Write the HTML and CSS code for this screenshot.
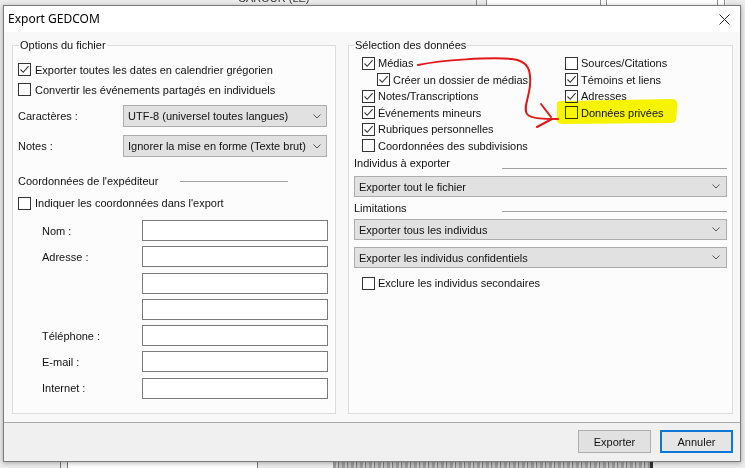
FILE: index.html
```html
<!DOCTYPE html>
<html lang="fr">
<head>
<meta charset="utf-8">
<title>Export GEDCOM</title>
<link rel="stylesheet" href="styles.css">
</head>
<body>
<span class="bg-text">CAROUR (LE)</span>
<div class="window">
  <div class="titlebar">
    <span class="title">Export GEDCOM</span>
    <svg class="close" width="11" height="11" viewBox="0 0 11 11"><path d="M0.5 0.5 L10.5 10.5 M10.5 0.5 L0.5 10.5" stroke="#222" stroke-width="1" fill="none"/></svg>
  </div>
  <div class="client">
    <div class="group group-left">
      <div class="legend">Options du fichier</div>
      <div class="opts">
        <label class="check"><span class="box"><svg viewBox="0 0 11 11"><path d="M1.5 5.5 L4.2 8.3 L9.6 2.2" stroke="#333" fill="none" stroke-width="1.1"/></svg></span>Exporter toutes les dates en calendrier grégorien</label>
        <label class="check"><span class="box"></span>Convertir les événements partagés en individuels</label>
      </div>
      <div class="field-row first">
        <span class="field-label">Caractères :</span>
        <div class="select">UTF-8 (universel toutes langues)<svg class="chev" viewBox="0 0 8 5"><path d="M0.5 0.5 L4 4 L7.5 0.5" stroke="#555" fill="none"/></svg></div>
      </div>
      <div class="field-row">
        <span class="field-label">Notes :</span>
        <div class="select">Ignorer la mise en forme (Texte brut)<svg class="chev" viewBox="0 0 8 5"><path d="M0.5 0.5 L4 4 L7.5 0.5" stroke="#555" fill="none"/></svg></div>
      </div>
      <div class="subhead subhead-left">Coordonnées de l'expéditeur<span class="rule"></span></div>
      <label class="check check-send"><span class="box"></span>Indiquer les coordonnées dans l'export</label>
      <div class="sender-grid">
        <span class="lab">Nom :</span><span class="input"></span>
        <span class="lab">Adresse :</span><span class="input"></span>
        <span class="lab"></span><span class="input"></span>
        <span class="lab"></span><span class="input"></span>
        <span class="lab">Téléphone :</span><span class="input"></span>
        <span class="lab">E-mail :</span><span class="input"></span>
        <span class="lab">Internet :</span><span class="input"></span>
      </div>
    </div>
    <div class="group group-right">
      <div class="legend legend-right">Sélection des données</div>
      <div class="sel">
        <div class="sel-col sel-col1">
          <label class="check small"><span class="box"><svg viewBox="0 0 11 11"><path d="M1.5 5.5 L4.2 8.3 L9.6 2.2" stroke="#333" fill="none" stroke-width="1.1"/></svg></span>Médias</label>
          <label class="check small indent"><span class="box"><svg viewBox="0 0 11 11"><path d="M1.5 5.5 L4.2 8.3 L9.6 2.2" stroke="#333" fill="none" stroke-width="1.1"/></svg></span>Créer un dossier de médias</label>
          <label class="check small"><span class="box"><svg viewBox="0 0 11 11"><path d="M1.5 5.5 L4.2 8.3 L9.6 2.2" stroke="#333" fill="none" stroke-width="1.1"/></svg></span>Notes/Transcriptions</label>
          <label class="check small"><span class="box"><svg viewBox="0 0 11 11"><path d="M1.5 5.5 L4.2 8.3 L9.6 2.2" stroke="#333" fill="none" stroke-width="1.1"/></svg></span>Événements mineurs</label>
          <label class="check small"><span class="box"><svg viewBox="0 0 11 11"><path d="M1.5 5.5 L4.2 8.3 L9.6 2.2" stroke="#333" fill="none" stroke-width="1.1"/></svg></span>Rubriques personnelles</label>
          <label class="check small"><span class="box"></span>Coordonnées des subdivisions</label>
        </div>
        <div class="sel-col">
          <label class="check small"><span class="box"></span>Sources/Citations</label>
          <label class="check small"><span class="box"><svg viewBox="0 0 11 11"><path d="M1.5 5.5 L4.2 8.3 L9.6 2.2" stroke="#333" fill="none" stroke-width="1.1"/></svg></span>Témoins et liens</label>
          <label class="check small"><span class="box"><svg viewBox="0 0 11 11"><path d="M1.5 5.5 L4.2 8.3 L9.6 2.2" stroke="#333" fill="none" stroke-width="1.1"/></svg></span>Adresses</label>
          <label class="check small"><span class="box"></span>Données privées</label>
        </div>
      </div>
      <div class="subhead subhead-right sh-ind">Individus à exporter<span class="rule"></span></div>
      <div class="select wide s1">Exporter tout le fichier<svg class="chev" viewBox="0 0 8 5"><path d="M0.5 0.5 L4 4 L7.5 0.5" stroke="#555" fill="none"/></svg></div>
      <div class="subhead subhead-right sh-lim">Limitations<span class="rule"></span></div>
      <div class="select wide s2">Exporter tous les individus<svg class="chev" viewBox="0 0 8 5"><path d="M0.5 0.5 L4 4 L7.5 0.5" stroke="#555" fill="none"/></svg></div>
      <div class="select wide s3">Exporter les individus confidentiels<svg class="chev" viewBox="0 0 8 5"><path d="M0.5 0.5 L4 4 L7.5 0.5" stroke="#555" fill="none"/></svg></div>
      <label class="check small excl"><span class="box"></span>Exclure les individus secondaires</label>
    </div>
  </div>
  <div class="footer">
    <button class="btn">Exporter</button>
    <button class="btn btn-default">Annuler</button>
  </div>
</div>
<svg class="annot" width="745" height="468" viewBox="0 0 745 468">
  <path d="M557 105 C556 101 559 101 565 101 L671 99 C677 99 678 102 677 110 L676 119 C676 123 673 123 667 123 L563 124 C557 124 556 121 557 116 Z" fill="#f9f700"/>
  <path d="M418 65 C442 60 490 57 512 59 C529 61 531 71 530 85 C529 98 523 108 527 114 C531 119 545 119 558 119" stroke="#e3171b" stroke-width="2" fill="none" stroke-linecap="round"/>
  <path d="M541 104 L551 117 M537 127 L552 119" stroke="#e3171b" stroke-width="2" fill="none" stroke-linecap="round"/>
</svg>
</body>
</html>
```
FILE: styles.css
```css
* { box-sizing: border-box; }
html, body { margin: 0; padding: 0; }
body {
  width: 745px;
  height: 468px;
  overflow: hidden;
  position: relative;
  font-family: "Liberation Sans", Arial, sans-serif;
  font-size: 11px;
  color: #111;
  background-color: #ececec;
  background-image:
    linear-gradient(#8a8a8a, #8a8a8a), linear-gradient(#8a8a8a, #8a8a8a),
    linear-gradient(#8a8a8a, #8a8a8a), linear-gradient(#8a8a8a, #8a8a8a),
    linear-gradient(#8a8a8a, #8a8a8a), linear-gradient(#8a8a8a, #8a8a8a),
    linear-gradient(#fff, #fff),
    linear-gradient(#777, #777), linear-gradient(#777, #777), linear-gradient(#777, #777),
    repeating-linear-gradient(90deg, #9b9b9b 0 3px, #c9c9c9 3px 5px, #7d7d7d 5px 6px, #bdbdbd 6px 9px),
    linear-gradient(#333, #333),
    linear-gradient(#fff, #fff);
  background-size:
    1px 6px, 1px 6px, 1px 6px, 1px 6px, 1px 6px, 1px 6px,
    240px 6px,
    1px 10px, 1px 10px, 1px 10px,
    317px 8px,
    3px 8px,
    190px 8px;
  background-position:
    476px 0, 486px 0, 600px 0, 606px 0, 717px 0, 724px 0,
    486px 0,
    60px 460px, 67px 460px, 257px 460px,
    333px 460px,
    650px 460px,
    67px 460px;
  background-repeat: no-repeat;
}
.bg-text {
  position: absolute;
  left: 238px;
  top: -8px;
  font-size: 11px;
  color: #333;
}
.window {
  position: absolute;
  left: 3px;
  top: 5px;
  width: 738px;
  height: 457px;
  border: 1px solid #7c7c7c;
  background: #f8f8f8;
  display: flex;
  flex-direction: column;
  box-shadow: 0 1px 5px rgba(0, 0, 0, 0.3);
}
.titlebar {
  height: 26px;
  flex: none;
  background: #fff;
  display: flex;
  align-items: center;
  justify-content: space-between;
  padding: 0 10px 0 4px;
}
.title {
  font-family: "Noto Sans", "Open Sans", sans-serif;
  font-size: 12px;
  color: #000;
  line-height: 16px;
}
.close { display: block; }
.client {
  height: 390px;
  flex: none;
  display: flex;
  gap: 12px;
  padding: 13px 7px 8px 8px;
}
.group {
  border: 1px solid #dcdcdc;
  background: #fcfcfc;
  display: flex;
  flex-direction: column;
}
.group-left { width: 324px; flex: none; padding-left: 5px; }
.group-right { flex: 1; padding: 0 5px; }
.legend {
  align-self: flex-start;
  margin: -8px 0 0 1px;
  padding: 0 1px;
  line-height: 14px;
  height: 14px;
  background: linear-gradient(#f8f8f8 50%, #fcfcfc 50%);
}
.legend-right { margin-left: 0; }
.check {
  display: flex;
  align-items: center;
  gap: 4px;
  height: 20px;
  white-space: nowrap;
}
.check.small { height: 16.5px; gap: 3px; }
.box {
  width: 13px;
  height: 13px;
  flex: none;
  border: 1px solid #333;
  background: #fff;
  display: block;
}
.box svg { display: block; width: 11px; height: 11px; }
.opts { margin-top: 7.5px; }
.field-row {
  display: flex;
  align-items: center;
  margin-top: 8px;
}
.field-row.first { margin-top: 5.5px; }
.field-label { width: 105px; flex: none; }
.select {
  height: 22px;
  width: 204px;
  background: #e1e1e1;
  border: 1px solid #adadad;
  display: flex;
  align-items: center;
  justify-content: space-between;
  padding: 0 5px 0 4px;
  white-space: nowrap;
}
.chev { width: 8px; height: 5px; display: block; }
.subhead {
  display: flex;
  line-height: 14px;
  height: 14px;
}
.subhead .rule {
  height: 1px;
  background: #a0a0a0;
  margin-left: auto;
}
.subhead-left { width: 270px; margin-top: 17px; }
.subhead-left .rule { width: 108px; margin-top: 7px; }
.check-send { margin-top: 5px; }
.sender-grid {
  margin-top: 7px;
  margin-left: 24px;
  display: grid;
  grid-template-columns: 100px 186px;
  grid-auto-rows: 21px;
  row-gap: 5.25px;
  align-items: center;
}
.input {
  height: 21px;
  background: #fff;
  border: 1px solid #7a7a7a;
}
.sel { display: flex; margin-top: 3px; }
.sel-col { display: flex; flex-direction: column; }
.sel-col1 { width: 211px; padding-left: 8px; }
.indent { padding-left: 15px; }
.subhead-right .rule { width: 225px; }
.sh-ind { margin-top: 2px; }
.sh-ind .rule { margin-top: 12px; }
.sh-lim { margin-top: 4px; }
.sh-lim .rule { margin-top: 10px; }
.select.wide { width: auto; height: 21px; padding-right: 6px; }
.s1 { margin-top: 6px; }
.s2 { margin-top: 4px; }
.s3 { margin-top: 7px; }
.excl { margin-top: 7px; margin-left: 8px; }
.footer {
  flex: 1;
  border-top: 1px solid #a9a9a9;
  background: #f0f0f0;
  display: flex;
  justify-content: flex-end;
  align-items: flex-start;
  gap: 9px;
  padding: 7px 7px 0 0;
}
.btn {
  width: 73px;
  height: 23px;
  font-family: "Liberation Sans", Arial, sans-serif;
  font-size: 11px;
  color: #111;
  background: #e1e1e1;
  border: 1px solid #adadad;
  padding: 0;
  margin: 0;
}
.btn-default {
  border: 2px solid #0a78d4;
  background: #e5e5e5;
}
.annot {
  position: absolute;
  left: 0;
  top: 0;
  pointer-events: none;
  mix-blend-mode: multiply;
}
```
